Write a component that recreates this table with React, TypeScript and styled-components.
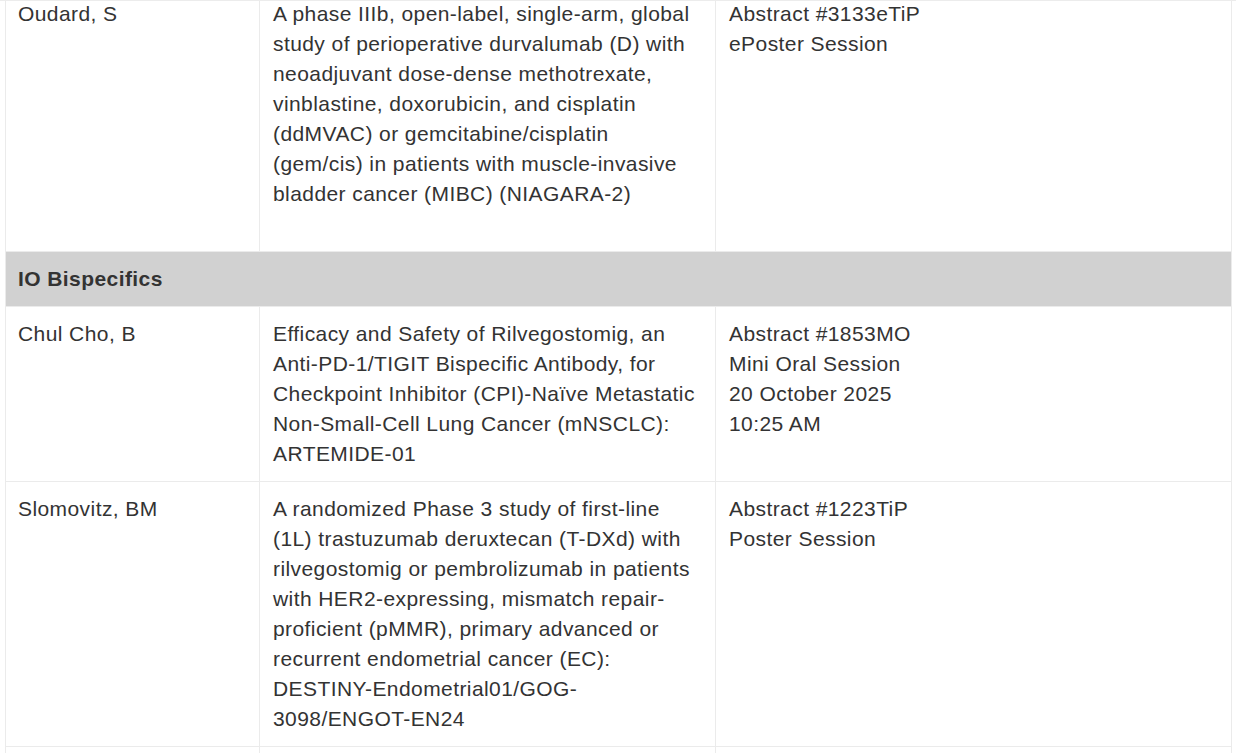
import React from "react";
import styled, { createGlobalStyle } from "styled-components";

const Global = createGlobalStyle`
  html, body { margin: 0; padding: 0; background: #ffffff; }
  body { font-family: "Liberation Sans", Arial, sans-serif; }
`;

const Frame = styled.div`
  height: 753px;
  overflow: hidden;
  padding: 0 5px;
  box-sizing: border-box;
  border-top: 1px solid #ececec;
`;

const Table = styled.table`
  width: 1226px;
  border-collapse: collapse;
  table-layout: fixed;
  margin-top: -15px;
  color: #333333;
  font-size: 21px;
  line-height: 30px;
  letter-spacing: 0.42px;
`;

const Cell = styled.td<{ $extra?: boolean }>`
  border: 1px solid #ebebeb;
  vertical-align: top;
  padding: 12px 12px ${(p) => (p.$extra ? "42px" : "12px")} 12px;
  white-space: nowrap;
  & + & {
    padding-left: 13px;
  }
`;

const GroupCell = styled.td`
  background: #d1d1d1;
  border: 1px solid #ebebeb;
  padding: 12px;
  font-weight: 700;
`;

type Row = { author: string; title: string[]; session: string[]; extra?: boolean };

const Lines = ({ items }: { items: string[] }) => (
  <>
    {items.map((t, i) => (
      <React.Fragment key={i}>
        {t}
        {i < items.length - 1 && <br />}
      </React.Fragment>
    ))}
  </>
);

const before: Row[] = [
  {
    author: "Oudard, S",
    title: [
      "A phase IIIb, open-label, single-arm, global",
      "study of perioperative durvalumab (D) with",
      "neoadjuvant dose-dense methotrexate,",
      "vinblastine, doxorubicin, and cisplatin",
      "(ddMVAC) or gemcitabine/cisplatin",
      "(gem/cis) in patients with muscle-invasive",
      "bladder cancer (MIBC) (NIAGARA-2)",
    ],
    session: ["Abstract #3133eTiP", "ePoster Session"],
    extra: true,
  },
];

const after: Row[] = [
  {
    author: "Chul Cho, B",
    title: [
      "Efficacy and Safety of Rilvegostomig, an",
      "Anti-PD-1/TIGIT Bispecific Antibody, for",
      "Checkpoint Inhibitor (CPI)-Naïve Metastatic",
      "Non-Small-Cell Lung Cancer (mNSCLC):",
      "ARTEMIDE-01",
    ],
    session: ["Abstract #1853MO", "Mini Oral Session", "20 October 2025", "10:25 AM"],
  },
  {
    author: "Slomovitz, BM",
    title: [
      "A randomized Phase 3 study of first-line",
      "(1L) trastuzumab deruxtecan (T-DXd) with",
      "rilvegostomig or pembrolizumab in patients",
      "with HER2-expressing, mismatch repair-",
      "proficient (pMMR), primary advanced or",
      "recurrent endometrial cancer (EC):",
      "DESTINY-Endometrial01/GOG-",
      "3098/ENGOT-EN24",
    ],
    session: ["Abstract #1223TiP", "Poster Session"],
  },
  {
    author: "",
    title: [""],
    session: [""],
  },
];

const DataRow = ({ r }: { r: Row }) => (
  <tr>
    <Cell $extra={r.extra}>{r.author}</Cell>
    <Cell $extra={r.extra}>
      <Lines items={r.title} />
    </Cell>
    <Cell $extra={r.extra}>
      <Lines items={r.session} />
    </Cell>
  </tr>
);

export default function App() {
  return (
    <>
      <Global />
      <Frame>
        <Table>
          <colgroup>
            <col style={{ width: 254 }} />
            <col style={{ width: 456 }} />
            <col style={{ width: 516 }} />
          </colgroup>
          <tbody>
            {before.map((r, i) => (
              <DataRow key={"b" + i} r={r} />
            ))}
            <tr>
              <GroupCell colSpan={3}>IO Bispecifics</GroupCell>
            </tr>
            {after.map((r, i) => (
              <DataRow key={"a" + i} r={r} />
            ))}
          </tbody>
        </Table>
      </Frame>
    </>
  );
}
